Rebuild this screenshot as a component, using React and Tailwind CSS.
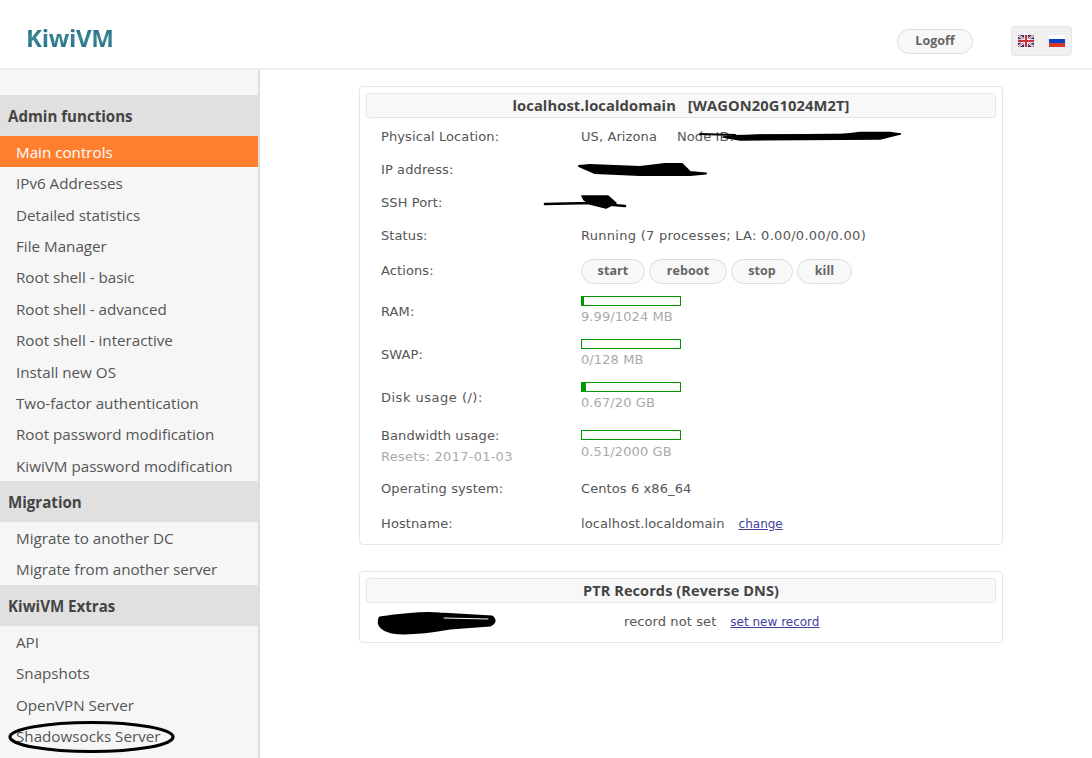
function Flag_GB() {
  return (
    <svg width="16" height="12" viewBox="0 0 16 12">
      <rect width="16" height="12" fill="#2a2f66" />
      <path d="M0 0L16 12M16 0L0 12" stroke="#fff" strokeWidth="2.4" />
      <path d="M0 0L16 12M16 0L0 12" stroke="#c8303a" strokeWidth="0.9" />
      <path d="M8 0V12M0 6H16" stroke="#fff" strokeWidth="3.6" />
      <path d="M8 0V12M0 6H16" stroke="#c8303a" strokeWidth="2" />
    </svg>
  );
}

function Flag_RU() {
  return (
    <svg width="16" height="12" viewBox="0 0 16 12">
      <rect width="16" height="4" fill="#ffffff" />
      <rect y="4" width="16" height="4" fill="#0a3fc4" />
      <rect y="8" width="16" height="4" fill="#d5352a" />
    </svg>
  );
}

function Pill({ children, className = "" }) {
  return (
    <button className={"h-[25px] rounded-[13px] border border-[#dddddd] bg-[#f8f8f8] font-['Open_Sans',sans-serif] text-[12.5px] font-bold text-[#666666] " + className}>
      {children}
    </button>
  );
}

function Head({ children }) {
  return (
    <div className="flex h-[41px] items-center bg-[#e0e0e0] pl-2 pt-[1px] font-['Open_Sans',sans-serif] text-[15.1px] font-bold text-[#444444]">
      {children}
    </div>
  );
}

function Item({ children, active }) {
  return (
    <div className={"flex h-[31.4px] items-center pl-4 pt-[1px] font-['Open_Sans',sans-serif] text-[15.2px] " + (active ? "bg-[#ff7f2f] text-white" : "text-[#555555]")}>
      {children}
    </div>
  );
}

function Row({ label, sub, h, labelClass = "", children }) {
  return (
    <div className={"flex items-center pl-[15px] " + h}>
      <div className={"w-[200px] shrink-0 " + labelClass}>
        <div>{label}</div>
        {sub && <div className="mt-[1px] tracking-[0.25px] text-[#aaaaaa]">{sub}</div>}
      </div>
      <div className="min-w-0">{children}</div>
    </div>
  );
}

function Bar({ pct, text, wrapClass = "-mt-[1px]", textClass = "mt-[3px]" }) {
  return (
    <div className={wrapClass}>
      <div className="h-[10px] w-[100px] border border-[#009900] bg-white">
        <div className="h-full bg-[#009900]" style={{ width: pct + "%" }} />
      </div>
      <div className={"leading-[16px] text-[#aaaaaa] " + textClass}>{text}</div>
    </div>
  );
}

function Card({ title, titleClass = "text-[14.7px]", className = "", children }) {
  return (
    <div className={"w-[644px] rounded-[4px] border border-[#e6e6e6] bg-white px-[6px] pt-[6px] " + className}>
      <div className={"flex h-[25px] items-center justify-center rounded-[3px] border border-[#e6e6e6] bg-[#f8f8f8] font-['Open_Sans',sans-serif] font-bold whitespace-pre text-[#444444] " + titleClass}>
        {title}
      </div>
      {children}
    </div>
  );
}

export default function App() {
  return (
    <div className="relative h-[758px] w-[1092px] overflow-hidden bg-white">
      <header className="flex h-[70px] items-center border-b-2 border-[#eeeeee] pl-[26px] pr-5">
        <div className="mt-[7px] bg-gradient-to-b from-[#0f6172] via-[#3a8696] to-[#0f6172] bg-clip-text font-['Open_Sans',sans-serif] text-[24px] font-bold tracking-[-0.3px] text-transparent">KiwiVM</div>
        <div className="ml-auto mt-[14px] flex items-center">
          <Pill className="w-[76px]">Logoff</Pill>
          <div className="ml-[38px] flex h-[30px] w-[61px] items-center gap-[15px] rounded-[3px] border border-[#e6e6e6] bg-[#f0f0f0] pl-[6px]">
            <Flag_GB />
            <Flag_RU />
          </div>
        </div>
      </header>

      <div className="flex h-[688px]">
        <aside className="h-full w-[260px] shrink-0 border-r-2 border-[#dddddd] bg-[#f6f6f6] pt-[25px]">
          <Head>Admin functions</Head>
          <Item active>Main controls</Item>
          <Item>IPv6 Addresses</Item>
          <Item>Detailed statistics</Item>
          <Item>File Manager</Item>
          <Item>Root shell - basic</Item>
          <Item>Root shell - advanced</Item>
          <Item>Root shell - interactive</Item>
          <Item>Install new OS</Item>
          <Item>Two-factor authentication</Item>
          <Item>Root password modification</Item>
          <Item>KiwiVM password modification</Item>
          <Head>Migration</Head>
          <Item>Migrate to another DC</Item>
          <Item>Migrate from another server</Item>
          <Head>KiwiVM Extras</Head>
          <Item>API</Item>
          <Item>Snapshots</Item>
          <Item>OpenVPN Server</Item>
          <Item>Shadowsocks Server</Item>
        </aside>

        <main className="pl-[99px] pt-[16px] font-['DejaVu_Sans',sans-serif] text-[13px] tracking-[0.1px] text-[#555555]">
          <Card title={"localhost.localdomain   [WAGON20G1024M2T]"} className="h-[459px]">
            <div className="pt-[2px]">
              <Row label="Physical Location:" h="h-[33px]">US, Arizona<span className="ml-[20px]">Node ID:</span></Row>
              <Row label="IP address:" h="h-[33px]" />
              <Row label="SSH Port:" h="h-[33px]" />
              <Row label="Status:" h="h-[33px]"><span className="tracking-[0.28px]">Running (7 processes; LA: 0.00/0.00/0.00)</span></Row>
              <Row label="Actions:" h="h-[37px]">
                <div className="mt-[2px] flex gap-[4px]">
                  <Pill className="w-[64px]">start</Pill>
                  <Pill className="w-[78px]">reboot</Pill>
                  <Pill className="w-[62px]">stop</Pill>
                  <Pill className="w-[55px]">kill</Pill>
                </div>
              </Row>
              <Row label="RAM:" labelClass="pt-[2px]" h="h-[43px]"><Bar pct={2} text="9.99/1024 MB" /></Row>
              <Row label="SWAP:" labelClass="pt-[2px]" h="h-[43px]"><Bar pct={0} text="0/128 MB" /></Row>
              <Row label={<span className="tracking-[0.5px]">Disk usage (/):</span>} labelClass="pt-[2px]" h="h-[43px]"><Bar pct={4} text="0.67/20 GB" /></Row>
              <Row label="Bandwidth usage:" sub="Resets: 2017-01-03" labelClass="pt-[3px]" h="h-[53px]"><Bar pct={0} text="0.51/2000 GB" wrapClass="" textClass="mt-[4px]" /></Row>
              <Row label="Operating system:" h="h-[36px]">Centos 6 x86_64</Row>
              <Row label="Hostname:" h="h-[33px]">
                localhost.localdomain<a className="ml-[14px] text-[12px] tracking-normal text-[#3f3f9f] underline">change</a>
              </Row>
            </div>
          </Card>
          <Card title="PTR Records (Reverse DNS)" titleClass="text-[14.5px]" className="mt-[26px] h-[72px]">
            <div className="flex h-[36px] items-center pl-[258px] pt-[1px]">
              record not set<a className="ml-[14px] text-[12px] tracking-normal text-[#3f3f9f] underline">set new record</a>
            </div>
          </Card>
        </main>
      </div>

      {/* hand-drawn marks lying over the screenshot */}
      <svg className="pointer-events-none absolute left-0 top-0" width="1092" height="758" viewBox="0 0 1092 758" fill="#000" stroke="#000" strokeLinecap="round" strokeLinejoin="round">
        <ellipse cx="91.5" cy="737" rx="81.5" ry="14.5" strokeWidth="3.2" fill="none" />
        <path d="M700 134 L735 135 M730 136 L900 134" strokeWidth="2" fill="none" />
        <path d="M723 137 L760 135 L840 135 L860 132.5 L890 132.5 L900 134 L880 139 L740 140 Z" strokeWidth="1.5" />
        <path d="M579 166 L590 165 L640 167 L665 164 L682 164 L690 172 L706 173.5 L690 175 L640 175 L595 173 Z" strokeWidth="2" />
        <path d="M545 204 L590 203 M590 203 L625 206" strokeWidth="2.6" fill="none" />
        <path d="M582 196 L608 196 L616 203 L606 208 L590 204 L584 200 Z" strokeWidth="1.5" />
        <path d="M380 618 Q420 612 440 614 L492 617 Q497 622 490 625 L450 628 Q410 635 392 632 Q376 628 380 618Z" strokeWidth="3" />
        <path d="M444 618 L488 619" stroke="#fff" strokeWidth="1" fill="none" />
      </svg>
    </div>
  );
}
